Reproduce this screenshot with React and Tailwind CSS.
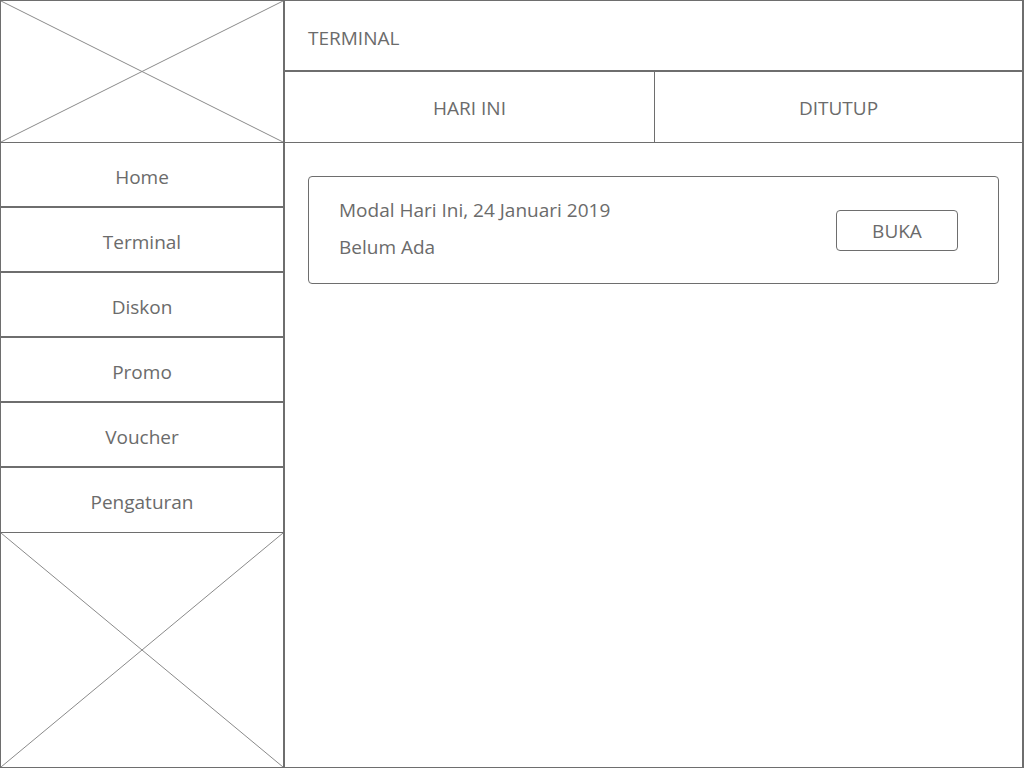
import React from 'react';

const menu = ['Home', 'Terminal', 'Diskon', 'Promo', 'Voucher', 'Pengaturan'];

function Placeholder({ className }) {
  return (
    <div className={`relative ${className}`}>
      <svg className="absolute inset-0 w-full h-full" preserveAspectRatio="none" viewBox="0 0 100 100">
        <line x1="0" y1="0" x2="100" y2="100" stroke="#8a8a8a" strokeWidth="1" vectorEffect="non-scaling-stroke" />
        <line x1="100" y1="0" x2="0" y2="100" stroke="#8a8a8a" strokeWidth="1" vectorEffect="non-scaling-stroke" />
      </svg>
    </div>
  );
}

export default function App() {
  return (
    <div
      className="w-[1024px] h-[768px] flex bg-white border border-[#6e6e6e] border-r-2 text-[#6b6b6b] overflow-hidden"
      style={{ fontFamily: '"Open Sans", "Liberation Sans", sans-serif' }}
    >
      {/* sidebar */}
      <div className="w-[284px] shrink-0 flex flex-col border-r-2 border-[#6e6e6e]">
        <Placeholder className="h-[142px] border-b border-[#6e6e6e]" />
        {menu.map((item, i) => (
          <div
            key={item}
            className={`h-[65px] flex items-center justify-center pt-[5px] text-[19px] border-[#6e6e6e] ${
              i === menu.length - 1 ? 'border-b' : 'border-b-2'
            }`}
          >
            {item}
          </div>
        ))}
        <Placeholder className="flex-1" />
      </div>

      {/* main */}
      <div className="flex-1 flex flex-col">
        <div className="h-[71px] flex items-center px-[23px] pt-[5px] text-[19px] border-b-2 border-[#6e6e6e]">
          TERMINAL
        </div>
        <div className="h-[71px] flex border-b border-[#6e6e6e] text-[19px]">
          <div className="w-[370px] flex items-center justify-center pt-[3px] border-r border-[#6e6e6e]">HARI INI</div>
          <div className="flex-1 flex items-center justify-center pt-[3px]">DITUTUP</div>
        </div>

        <div className="pt-[33px] pl-[23px] pr-[23px]">
          <div className="h-[108px] border border-[#6e6e6e] rounded-[4px] flex items-center justify-between pl-[30px] pr-[40px]">
            <div className="flex flex-col gap-[8px] text-[19px] leading-[29px] -mt-[3px]">
              <div>Modal Hari Ini, 24 Januari 2019</div>
              <div>Belum Ada</div>
            </div>
            <button className="w-[122px] h-[41px] border border-[#6e6e6e] rounded-[4px] pt-[3px] text-[19px] text-[#6b6b6b]">
              BUKA
            </button>
          </div>
        </div>
      </div>
    </div>
  );
}
